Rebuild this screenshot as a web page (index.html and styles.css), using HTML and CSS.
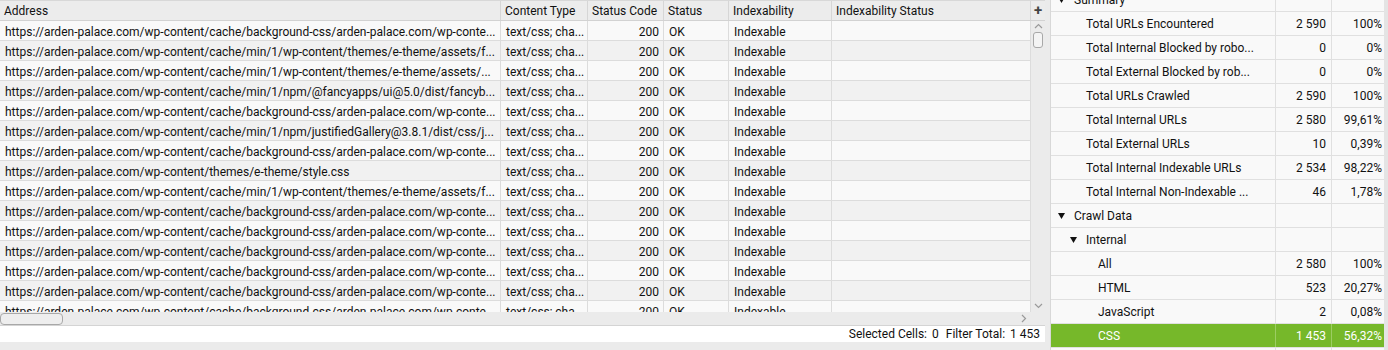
FILE: index.html
```html
<!DOCTYPE html>
<html lang="en">
<head>
  <meta charset="UTF-8" />
  <title>Crawl Overview</title>
  <link rel="stylesheet" href="styles.css">
</head>
<body>

  <div class="app">

    <!-- Left: URL grid -->
    <div class="grid-pane">
      <div class="grid-body">
        <div class="grid-main">
          <div class="row head">
            <div class="cell">Address</div>
            <div class="cell">Content Type</div>
            <div class="cell">Status Code</div>
            <div class="cell">Status</div>
            <div class="cell">Indexability</div>
            <div class="cell">Indexability Status</div>
          </div>
          <div id="rows"></div>
        </div>

        <div class="vscroll">
          <div class="corner">+</div>
          <div class="track">
            <svg class="chev" width="9" height="6" viewBox="0 0 9 6"><polyline points="1,5 4.5,1.5 8,5" fill="none" stroke="#9a9a9a" stroke-width="1.2"/></svg>
            <div class="thumb"></div>
            <div class="spacer"></div>
            <svg class="chev" width="9" height="6" viewBox="0 0 9 6"><polyline points="1,1 4.5,4.5 8,1" fill="none" stroke="#9a9a9a" stroke-width="1.2"/></svg>
          </div>
        </div>
      </div>

      <div class="hscroll">
        <div class="hthumb"></div>
        <svg class="chev-right" width="6" height="9" viewBox="0 0 6 9"><polyline points="1,1 4.5,4.5 1,8" fill="none" stroke="#9a9a9a" stroke-width="1.2"/></svg>
        <div class="hcorner"></div>
      </div>

      <div class="statusbar">
        <span>Selected Cells:</span><span>0</span><span class="gap">Filter Total:</span><span>1 453</span>
      </div>
    </div>

    <div class="splitter"></div>

    <!-- Right: overview tree -->
    <div class="tree-pane">
      <div class="tree" id="tree"></div>
    </div>
    <div class="edge"></div>

  </div>

  <script>
    const bg = "https://arden-palace.com/wp-content/cache/background-css/arden-palace.com/wp-conte...";
    const urls = [
      bg,
      "https://arden-palace.com/wp-content/cache/min/1/wp-content/themes/e-theme/assets/f...",
      "https://arden-palace.com/wp-content/cache/min/1/wp-content/themes/e-theme/assets/...",
      "https://arden-palace.com/wp-content/cache/min/1/npm/@fancyapps/ui@5.0/dist/fancyb...",
      bg,
      "https://arden-palace.com/wp-content/cache/min/1/npm/justifiedGallery@3.8.1/dist/css/j...",
      bg,
      "https://arden-palace.com/wp-content/themes/e-theme/style.css",
      "https://arden-palace.com/wp-content/cache/min/1/wp-content/themes/e-theme/assets/f...",
      bg, bg, bg, bg, bg, bg
    ];

    const rows = document.getElementById("rows");
    urls.forEach((url, i) => {
      const row = document.createElement("div");
      row.className = "row" + (i % 2 ? " alt" : "");
      row.innerHTML =
        '<div class="cell">' + url + '</div>' +
        '<div class="cell">text/css; cha...</div>' +
        '<div class="cell num">200</div>' +
        '<div class="cell">OK</div>' +
        '<div class="cell">Indexable</div>' +
        '<div class="cell"></div>';
      rows.appendChild(row);
    });

    // [label, count, percent, level, hasChildren, selected]
    const items = [
      ["Summary", "", "", 0, true],
      ["Total URLs Encountered", "2 590", "100%", 1],
      ["Total Internal Blocked by robo...", "0", "0%", 1],
      ["Total External Blocked by rob...", "0", "0%", 1],
      ["Total URLs Crawled", "2 590", "100%", 1],
      ["Total Internal URLs", "2 580", "99,61%", 1],
      ["Total External URLs", "10", "0,39%", 1],
      ["Total Internal Indexable URLs", "2 534", "98,22%", 1],
      ["Total Internal Non-Indexable ...", "46", "1,78%", 1],
      ["Crawl Data", "", "", 0, true],
      ["Internal", "", "", 1, true],
      ["All", "2 580", "100%", 2],
      ["HTML", "523", "20,27%", 2],
      ["JavaScript", "2", "0,08%", 2],
      ["CSS", "1 453", "56,32%", 2, false, true],
      ["Images", "602", "23,33%", 2]
    ];

    const tree = document.getElementById("tree");
    items.forEach(([label, count, pct, level, parent, selected]) => {
      const row = document.createElement("div");
      row.className = "tree-row" + (selected ? " selected" : "");
      const arrow = parent
        ? '<svg class="caret" width="7" height="6" viewBox="0 0 7 6"><polygon points="0,0 7,0 3.5,6" fill="#111"/></svg>'
        : '<span class="caret-space"></span>';
      row.innerHTML =
        '<div class="tcell label" style="padding-left:' + (7 + level * 12) + 'px">' + arrow + '<span>' + label + '</span></div>' +
        '<div class="tcell count">' + count + '</div>' +
        '<div class="tcell pct">' + pct + '</div>';
      tree.appendChild(row);
    });
  </script>

</body>
</html>
```

FILE: styles.css
```css
* {
  margin: 0;
  padding: 0;
  box-sizing: border-box;
}

body {
  font-family: Roboto, "Liberation Sans", sans-serif;
  font-size: 12px;
  color: #111;
  background-color: #ebebeb;
  width: 1388px;
  height: 350px;
  overflow: hidden;
}

.app {
  display: flex;
  height: 350px;
}

/* Left grid */
.grid-pane {
  width: 1045px;
  display: flex;
  flex-direction: column;
}

.grid-body {
  display: flex;
  height: 312px;
}

.grid-main {
  width: 1031px;
  overflow: hidden;
  background-color: #fafafa;
}

.row {
  display: grid;
  grid-template-columns: 501px 87px 76px 65px 103px 199px;
  height: 20px;
  border-bottom: 1px solid #dcdcdc;
  background-color: #f9f9f9;
}

.row.alt {
  background-color: #f1f1f1;
}

.row.head {
  height: 21px;
  background-color: #ececec;
  border-top: 1px solid #d8d8d8;
  border-bottom: 1px solid #d2d2d2;
}

.cell {
  padding: 0 4px 0 5px;
  line-height: 23px;
  white-space: nowrap;
  overflow: hidden;
  border-right: 1px solid #dcdcdc;
}

.row.head .cell {
  padding-left: 4px;
  line-height: 21px;
  border-right-color: #d6d6d6;
}

.cell.num {
  text-align: right;
}

.vscroll {
  width: 14px;
  display: flex;
  flex-direction: column;
  background-color: #ebebeb;
}

.corner {
  height: 21px;
  border-top: 1px solid #d8d8d8;
  border-bottom: 1px solid #d2d2d2;
  background-color: #ececec;
  text-align: center;
  font-weight: bold;
  font-size: 15px;
  line-height: 18px;
  color: #444;
}

.track {
  flex: 1;
  display: flex;
  flex-direction: column;
  align-items: center;
  padding: 2px 0 3px;
}

.chev {
  display: block;
}

.thumb {
  width: 10px;
  height: 16px;
  margin-top: 3px;
  border: 1px solid #a8a8a8;
  border-radius: 3px;
  background-color: #f4f4f4;
}

.spacer {
  flex: 1;
}

.hscroll {
  height: 14px;
  display: flex;
  align-items: center;
  background-color: #ebebeb;
  border-bottom: 1px solid #d4d4d4;
}

.hthumb {
  width: 63px;
  height: 12px;
  border: 1px solid #a8a8a8;
  border-radius: 4px;
  background-color: #eeeeee;
}

.chev-right {
  margin-left: auto;
  margin-right: 4px;
}

.hcorner {
  width: 14px;
}

.statusbar {
  height: 16px;
  background-color: #ffffff;
  display: flex;
  justify-content: flex-end;
  align-items: center;
  gap: 5px;
  padding-right: 5px;
  white-space: nowrap;
}

.statusbar .gap {
  margin-left: 2px;
}

.splitter {
  width: 6px;
  background-color: #ebebeb;
  border-right: 1px solid #d8d8d8;
}

/* Right tree */
.tree-pane {
  width: 333px;
  overflow: hidden;
  background-color: #f9f9f9;
}

.tree {
  margin-top: -12px;
}

.tree-row {
  display: grid;
  grid-template-columns: 225px 56px 52px;
  height: 24px;
  border-bottom: 1px solid #e0e0e0;
}

.tcell {
  display: flex;
  align-items: center;
  white-space: nowrap;
  overflow: hidden;
  border-right: 1px solid #e0e0e0;
}

.tcell.count {
  justify-content: flex-end;
  padding-right: 5px;
}

.tcell.pct {
  justify-content: flex-end;
  padding-right: 2px;
  border-right: none;
}

.caret {
  flex-shrink: 0;
  margin-right: 9px;
}

.caret-space {
  width: 16px;
  flex-shrink: 0;
}

.tree-row.selected {
  background-color: #76b82a;
  color: #ffffff;
}

.tree-row.selected .tcell {
  border-right-color: #9ccd63;
}

.edge {
  width: 4px;
  background-color: #e4e4e4;
}
```
